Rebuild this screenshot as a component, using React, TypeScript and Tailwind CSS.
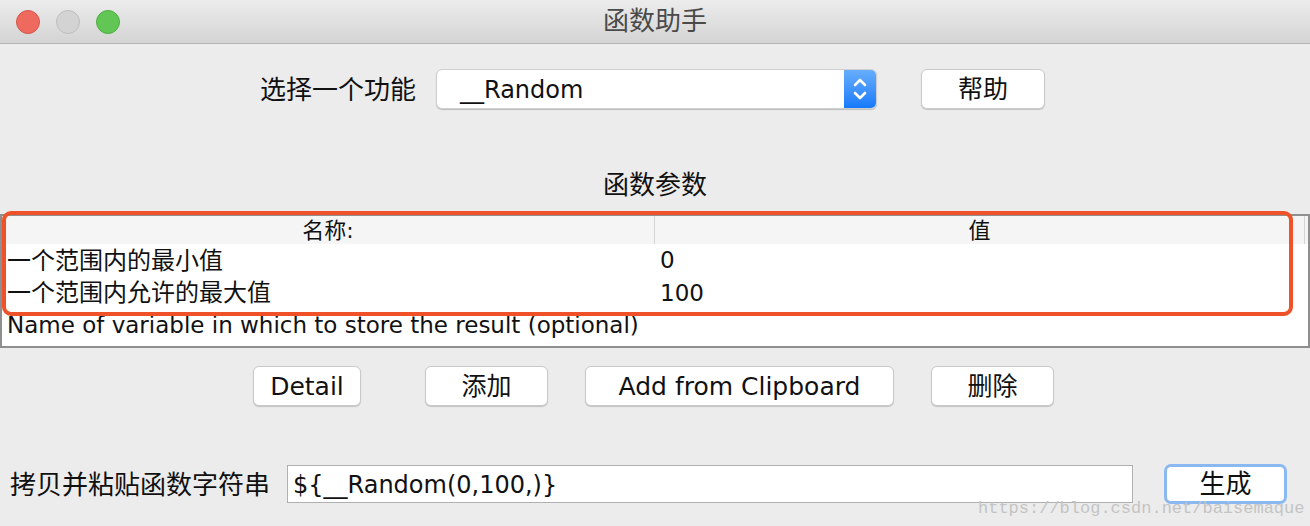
import React from "react";

const font = { fontFamily: '"DejaVu Sans", "Noto Sans CJK SC", sans-serif' };

function MacButton({ children, className = "" }: { children: React.ReactNode; className?: string }) {
  return (
    <div
      className={`flex items-center justify-center h-[40px] pt-[2px] bg-white rounded-[6px] border border-[#c9c9c9] shadow-[0_1px_1px_rgba(0,0,0,0.18)] text-[#111] ${className}`}
    >
      {children}
    </div>
  );
}

export default function App() {
  return (
    <div className="relative w-[1310px] h-[526px] bg-[#ececec] overflow-hidden flex flex-col" style={font}>
      {/* Title bar */}
      <div className="relative h-[44px] flex items-center bg-gradient-to-b from-[#ececec] to-[#d4d4d4] border-b border-[#b3b3b3] shrink-0">
        <div className="flex items-center gap-[16px] pl-[16px]">
          <div className="w-[24px] h-[24px] rounded-full bg-[#ee6a5f] border border-[#d6564c]" />
          <div className="w-[24px] h-[24px] rounded-full bg-[#d3d3d3] border border-[#bdbdbd]" />
          <div className="w-[24px] h-[24px] rounded-full bg-[#62c655] border border-[#4fae43]" />
        </div>
        <div className="absolute inset-0 flex items-center justify-center text-[26px] text-[#4a4a4a]">函数助手</div>
      </div>

      {/* Select row */}
      <div className="flex items-center mt-[25px] h-[40px]">
        <div className="ml-[260px] text-[26px] text-[#111] w-[176px] pt-[2px]">选择一个功能</div>
        <div className="flex w-[441px] h-[40px] bg-white rounded-[6px] border border-[#cfcfcf] shadow-[0_1px_1px_rgba(0,0,0,0.2)] overflow-hidden">
          <div className="flex-1 flex items-center pl-[23px] pt-[2px] text-[24px] text-[#111]">__Random</div>
          <div className="w-[32px] h-full bg-gradient-to-b from-[#66aefb] to-[#1479fb] flex items-center justify-center">
            <svg width="16" height="26" viewBox="0 0 16 26" fill="none" stroke="white" strokeWidth="2.6" strokeLinecap="round" strokeLinejoin="round">
              <path d="M3 9 L8 4 L13 9" />
              <path d="M3 17 L8 22 L13 17" />
            </svg>
          </div>
        </div>
        <MacButton className="ml-[44px] w-[124px] text-[25px]">帮助</MacButton>
      </div>

      {/* Section title */}
      <div className="mt-[60px] h-[32px] flex items-center justify-center text-[26px] text-[#111]">函数参数</div>

      {/* Table */}
      <div className="relative mt-[13px] h-[134px] border-2 border-[#8f8f8f] bg-white flex flex-col">
        <div className="flex h-[28px] bg-[#f5f5f5] text-[22px] text-[#111]">
          <div className="w-[653px] flex items-center justify-center border-r border-[#d5d5d5]">名称:</div>
          <div className="flex-1 flex items-center justify-center">值</div>
          <div className="w-[4px] border-l border-[#d5d5d5]" />
        </div>
        <div className="flex h-[33px] items-center text-[23px] text-[#111]">
          <div className="w-[654px] pl-[5px] text-[24px]">一个范围内的最小值</div>
          <div className="pl-[4px]">0</div>
        </div>
        <div className="flex h-[32px] items-center text-[23px] text-[#111]">
          <div className="w-[654px] pl-[5px] text-[24px]">一个范围内允许的最大值</div>
          <div className="pl-[4px]">100</div>
        </div>
        <div className="flex h-[33px] items-center text-[23px] text-[#111]">
          <div className="pl-[5px]">Name of variable in which to store the result (optional)</div>
        </div>
        {/* red annotation */}
        <div className="absolute left-[0px] top-[-5px] w-[1291px] h-[105px] border-[4px] border-[#ef5128] rounded-[9px]" />
      </div>

      {/* Buttons row */}
      <div className="flex items-center mt-[18px] h-[40px]">
        <MacButton className="ml-[253px] w-[108px] text-[25px]">Detail</MacButton>
        <MacButton className="ml-[64px] w-[123px] text-[25px]">添加</MacButton>
        <MacButton className="ml-[37px] w-[309px] text-[25px]">Add from Clipboard</MacButton>
        <MacButton className="ml-[37px] w-[123px] text-[25px]">删除</MacButton>
      </div>

      {/* Bottom row */}
      <div className="flex items-center mt-[58px] h-[40px]">
        <div className="ml-[10px] w-[277px] text-[26px] text-[#111] pt-[2px]">拷贝并粘贴函数字符串</div>
        <div className="w-[846px] h-[38px] bg-white border border-[#b0b0b0] flex items-center pl-[5px] pt-[2px] text-[24px] text-[#111]">
          {"${__Random(0,100,)}"}
        </div>
        <div className="ml-[31px] w-[123px] h-[40px] rounded-[7px] border-[3px] border-[#8ab8f0] bg-white flex items-center justify-center text-[26px] text-[#111]">
          生成
        </div>
      </div>

      {/* watermark */}
      <div
        className="absolute left-[978px] top-[496px] text-[17px] text-[#c4c4c4] whitespace-nowrap"
        style={{ fontFamily: '"Liberation Mono", monospace' }}
      >
        https://blog.csdn.net/baisemaque
      </div>
    </div>
  );
}
